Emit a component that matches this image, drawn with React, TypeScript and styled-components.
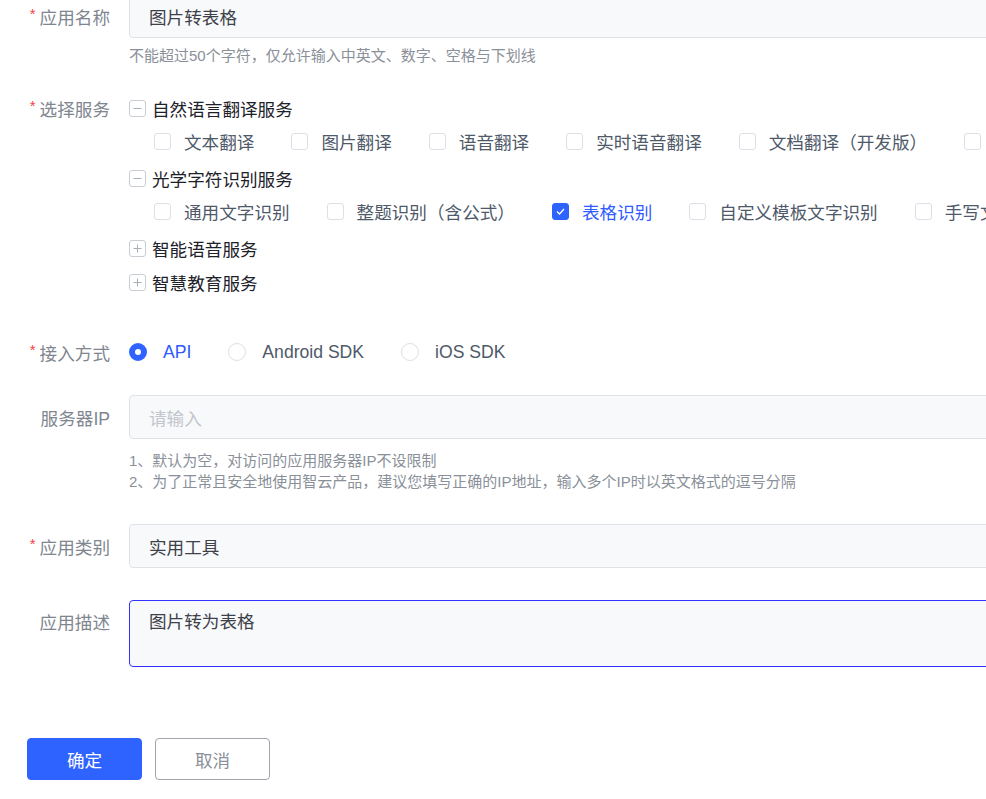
import React from "react";
import styled, { createGlobalStyle } from "styled-components";

const GlobalStyles = createGlobalStyle`
  html,
  body {
    margin: 0;
    overflow: hidden;
    background: #fff;
  }

  body {
    font-family: "Liberation Sans", "Noto Sans CJK SC", sans-serif;
    font-size: 17.6px;
  }
`;

const primary = "#2f63ff";

const Form = styled.form`
  margin-top: -6px;
  padding-bottom: 20px;
`;

const FormItem = styled.div<{ $gap: number }>`
  display: flex;
  align-items: flex-start;
  margin-bottom: ${(p) => p.$gap}px;
`;

const Label = styled.label<{ $height?: number }>`
  width: 110px;
  flex-shrink: 0;
  margin-right: 19px;
  height: ${(p) => p.$height ?? 44}px;
  display: flex;
  align-items: center;
  justify-content: flex-end;
  color: #80868f;
  white-space: nowrap;
`;

const Star = styled.span`
  color: #f53f3f;
  font-size: 15px;
  margin-right: 4px;
  position: relative;
  top: -3px;
`;

const Control = styled.div`
  width: 900px;
  flex-shrink: 0;
`;

const Input = styled.div<{ $placeholder?: boolean }>`
  box-sizing: border-box;
  height: 44px;
  padding: 0 19px;
  display: flex;
  align-items: center;
  background: #f8f9fb;
  border: 1px solid #dfe2e7;
  border-radius: 4px;
  color: ${(p) => (p.$placeholder ? "#c2c6cc" : "#3d4148")};
`;

const TextArea = styled.div`
  box-sizing: border-box;
  height: 67px;
  padding: 10px 19px;
  line-height: 22px;
  background: #f8f9fb;
  border: 1px solid #3333ff;
  border-radius: 4px;
  color: #3d4148;
`;

const Help = styled.div<{ $top: number }>`
  margin-top: ${(p) => p.$top}px;
  font-size: 15px;
  line-height: 21px;
  color: #8a9099;
`;

const TreeNode = styled.div`
  height: 34px;
  display: flex;
  align-items: center;
  color: #1d2129;
  white-space: nowrap;
`;

const Toggle = styled.span`
  box-sizing: border-box;
  width: 17px;
  height: 17px;
  margin-right: 6px;
  border: 1px solid #c9cdd4;
  border-radius: 3px;
  display: inline-flex;
  align-items: center;
  justify-content: center;
  color: #a9aeb6;
`;

const ChildRow = styled.div`
  height: 33px;
  margin-bottom: 3px;
  padding-left: 25px;
  display: flex;
  align-items: center;
  white-space: nowrap;
`;

const Option = styled.span<{ $checked?: boolean }>`
  display: inline-flex;
  align-items: center;
  margin-right: 37px;
  color: ${(p) => (p.$checked ? "#2f5bff" : "#4e5969")};
`;

const Box = styled.span<{ $checked?: boolean }>`
  box-sizing: border-box;
  width: 17px;
  height: 17px;
  margin-right: 13px;
  border: 1px solid ${(p) => (p.$checked ? primary : "#dcdfe5")};
  border-radius: 3px;
  background: ${(p) => (p.$checked ? primary : "#fff")};
  display: inline-flex;
  align-items: center;
  justify-content: center;
`;

const RadioGroup = styled.div`
  height: 44px;
  display: flex;
  align-items: center;
`;

const Radio = styled.span<{ $checked?: boolean }>`
  display: inline-flex;
  align-items: center;
  margin-right: 37px;
  color: ${(p) => (p.$checked ? "#2f5bff" : "#4e5969")};
`;

const Dot = styled.span<{ $checked?: boolean }>`
  box-sizing: border-box;
  width: 18px;
  height: 18px;
  margin-right: 16px;
  border-radius: 50%;
  border: ${(p) => (p.$checked ? `6px solid ${primary}` : "1px solid #dcdfe5")};
  background: #fff;
`;

const Actions = styled.div`
  display: flex;
  gap: 13px;
  padding-left: 27px;
`;

const Button = styled.button<{ $primary?: boolean }>`
  box-sizing: border-box;
  width: 115px;
  height: 42px;
  border-radius: 4px;
  font: inherit;
  cursor: pointer;
  border: 1px solid ${(p) => (p.$primary ? primary : "#a0a4ab")};
  background: ${(p) => (p.$primary ? primary : "#fff")};
  color: ${(p) => (p.$primary ? "#fff" : "#8a8f98")};
`;

const ToggleIcon = ({ open }: { open: boolean }) => (
  <Toggle>
    <svg width="11" height="11" viewBox="0 0 11 11">
      <line x1="1.5" y1="5.5" x2="9.5" y2="5.5" stroke="currentColor" strokeWidth="1" />
      {!open && <line x1="5.5" y1="1.5" x2="5.5" y2="9.5" stroke="currentColor" strokeWidth="1" />}
    </svg>
  </Toggle>
);

const Check = ({ label, checked }: { label: string; checked?: boolean }) => (
  <Option $checked={checked}>
    <Box $checked={checked}>
      {checked && (
        <svg width="11" height="11" viewBox="0 0 11 11">
          <polyline points="2,5.5 4.5,8 9,3" fill="none" stroke="#fff" strokeWidth="1.3" />
        </svg>
      )}
    </Box>
    {label}
  </Option>
);

const RequiredLabel = ({ text, required, height }: { text: string; required?: boolean; height?: number }) => (
  <Label $height={height}>
    {required && <Star>*</Star>}
    {text}
  </Label>
);

const nlp = ["文本翻译", "图片翻译", "语音翻译", "实时语音翻译", "文档翻译（开发版）", "文档翻译"];
const ocr = ["通用文字识别", "整题识别（含公式）", "表格识别", "自定义模板文字识别", "手写文字识别"];

export default function App() {
  return (
    <Form>
      <GlobalStyles />
      <FormItem $gap={25}>
        <RequiredLabel text="应用名称" required />
        <Control>
          <Input>图片转表格</Input>
          <Help $top={7}>不能超过50个字符，仅允许输入中英文、数字、空格与下划线</Help>
        </Control>
      </FormItem>

      <FormItem $gap={31}>
        <RequiredLabel text="选择服务" required height={34} />
        <Control>
          <TreeNode>
            <ToggleIcon open />
            自然语言翻译服务
          </TreeNode>
          <ChildRow>
            {nlp.map((n) => (
              <Check key={n} label={n} />
            ))}
          </ChildRow>
          <TreeNode>
            <ToggleIcon open />
            光学字符识别服务
          </TreeNode>
          <ChildRow>
            {ocr.map((n) => (
              <Check key={n} label={n} checked={n === "表格识别"} />
            ))}
          </ChildRow>
          <TreeNode>
            <ToggleIcon open={false} />
            智能语音服务
          </TreeNode>
          <TreeNode>
            <ToggleIcon open={false} />
            智慧教育服务
          </TreeNode>
        </Control>
      </FormItem>

      <FormItem $gap={21}>
        <RequiredLabel text="接入方式" required />
        <RadioGroup>
          <Radio $checked>
            <Dot $checked />
            API
          </Radio>
          <Radio>
            <Dot />
            Android SDK
          </Radio>
          <Radio>
            <Dot />
            iOS SDK
          </Radio>
        </RadioGroup>
      </FormItem>

      <FormItem $gap={32}>
        <RequiredLabel text="服务器IP" />
        <Control>
          <Input $placeholder>请输入</Input>
          <Help $top={11}>
            1、默认为空，对访问的应用服务器IP不设限制
            <br />
            2、为了正常且安全地使用智云产品，建议您填写正确的IP地址，输入多个IP时以英文格式的逗号分隔
          </Help>
        </Control>
      </FormItem>

      <FormItem $gap={32}>
        <RequiredLabel text="应用类别" required />
        <Control>
          <Input>实用工具</Input>
        </Control>
      </FormItem>

      <FormItem $gap={71}>
        <RequiredLabel text="应用描述" height={42} />
        <Control>
          <TextArea>图片转为表格</TextArea>
        </Control>
      </FormItem>

      <Actions>
        <Button type="button" $primary>
          确定
        </Button>
        <Button type="button">取消</Button>
      </Actions>
    </Form>
  );
}
